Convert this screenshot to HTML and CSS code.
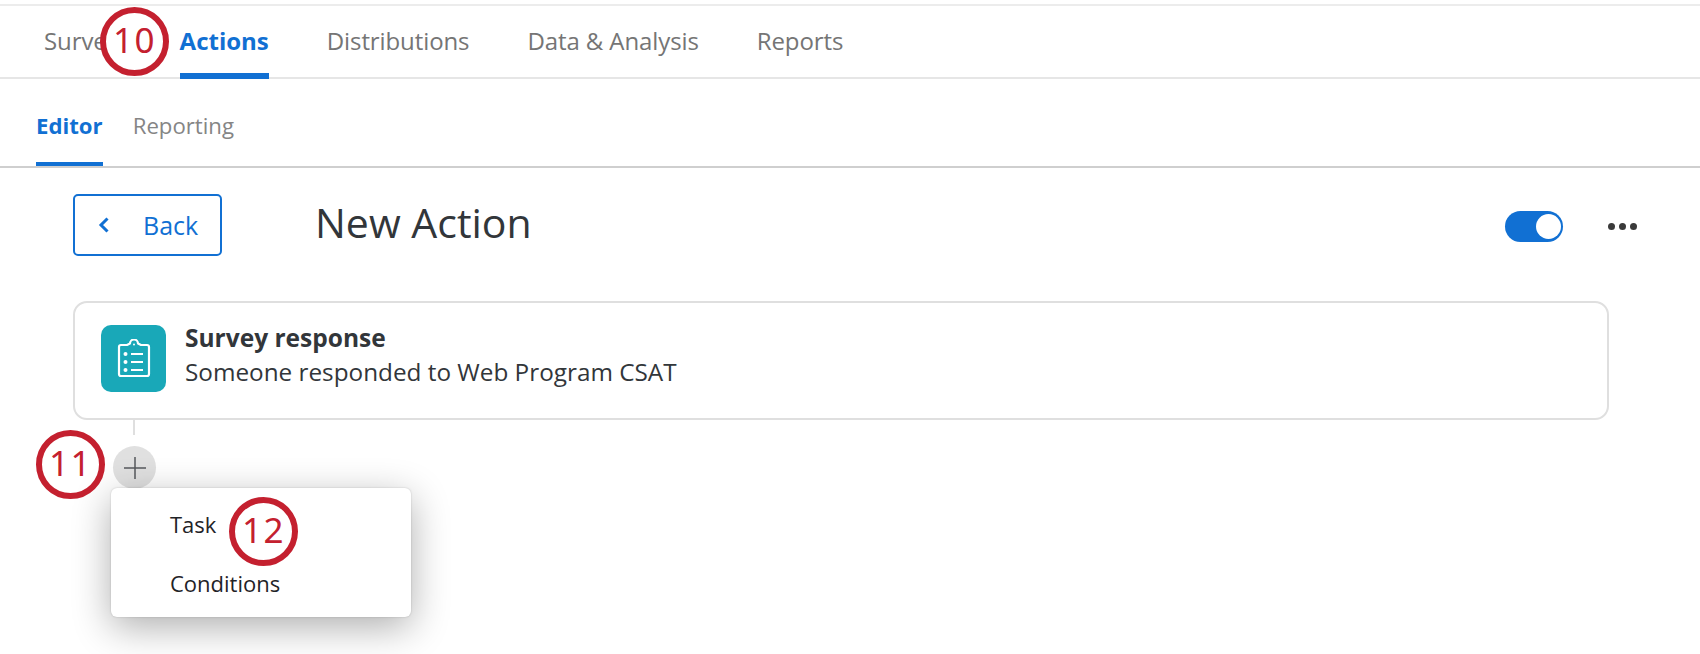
FILE: index.html
```html
<!DOCTYPE html>
<html lang="en">
<head>
<meta charset="utf-8">
<title>New Action</title>
<link rel="stylesheet" href="styles.css">
</head>
<body>
<div class="page">
  <nav class="main-nav">
    <a class="main-tab first">Survey</a>
    <a class="main-tab active">Actions</a>
    <a class="main-tab">Distributions</a>
    <a class="main-tab">Data &amp; Analysis</a>
    <a class="main-tab">Reports</a>
  </nav>
  <nav class="sub-nav">
    <a class="sub-tab active">Editor</a>
    <a class="sub-tab">Reporting</a>
  </nav>
  <main class="content">
    <header class="head">
      <button class="back">
        <svg class="chev" width="12" height="18" viewBox="0 0 12 18"><path d="M9.500 2.500 3 9l6.500 6.500" fill="none" stroke="#1170d3" stroke-width="3"/></svg>
        <span>Back</span>
      </button>
      <h1 class="title">New Action</h1>
      <div class="head-right">
        <span class="toggle"><span class="knob"></span></span>
        <span class="dots"><i></i><i></i><i></i></span>
      </div>
    </header>
    <section class="card">
      <span class="tile">
        <svg width="34" height="40" viewBox="0 0 34 40" fill="none" stroke="#fff" stroke-width="2.200">
          <path d="M10 6H4a2 2 0 0 0-2 2v27a2 2 0 0 0 2 2h26a2 2 0 0 0 2-2V8a2 2 0 0 0-2-2h-6l-3-1.500a4 4 0 0 0-8 0z" stroke-linejoin="round"/>
          <circle cx="17" cy="5.500" r="1" fill="#fff" stroke="none"/>
          <path d="M14 15h12M14 23h12M14 31h12"/>
          <circle cx="8.500" cy="15" r="2" fill="#fff" stroke="none"/>
          <circle cx="8.500" cy="23" r="2" fill="#fff" stroke="none"/>
          <circle cx="8.500" cy="31" r="2" fill="#fff" stroke="none"/>
        </svg>
      </span>
      <div class="card-text">
        <div class="card-title">Survey response</div>
        <div class="card-sub">Someone responded to Web Program CSAT</div>
      </div>
    </section>
    <div class="connector"></div>
    <div class="add-wrap">
      <span class="add">
        <svg width="24" height="24" viewBox="0 0 24 24"><path d="M12 1v22M1 12h22" stroke="#55585c" stroke-width="1.500"/></svg>
      </span>
      <div class="menu">
        <div class="menu-item">Task</div>
        <div class="menu-item">Conditions</div>
      </div>
    </div>
  </main>
  <span class="mark mark-10">10</span>
  <span class="mark mark-11">11</span>
  <span class="mark mark-12">12</span>
</div>
</body>
</html>
```
FILE: styles.css
```css
* { box-sizing: border-box; }
html, body { margin: 0; padding: 0; background: #fff; }
body { font-family: "Open Sans", "Noto Sans", sans-serif; color: #32363a; }
.page { position: relative; width: 1700px; height: 654px; overflow: hidden; padding-top: 4px; }

.main-nav {
  display: flex;
  gap: 58px;
  height: 75px;
  padding-left: 44px;
  border-top: 2px solid #ececec;
  border-bottom: 2px solid #e6e6e6;
}
.main-tab {
  display: block;
  height: 73px;
  padding-top: 19px;
  font-size: 24px;
  line-height: 32px;
  color: #757575;
  letter-spacing: -0.1px;
}
.main-tab.first { margin-right: 3px; }
.main-tab.active {
  color: #1170d3;
  font-weight: 700;
  letter-spacing: 0;
  border-bottom: 6px solid #1170d3;
}

.sub-nav {
  display: flex;
  gap: 30px;
  height: 89px;
  padding-left: 36px;
  border-bottom: 2px solid #cfcfcf;
}
.sub-tab {
  display: block;
  height: 87px;
  padding-top: 31px;
  font-size: 22.2px;
  line-height: 32px;
  color: #858585;
}
.sub-tab.active {
  color: #1170d3;
  font-weight: 700;
  border-bottom: 4px solid #1170d3;
}

.content { padding: 26px 91px 0 73px; }

.head { display: flex; align-items: center; height: 62px; }
.back {
  display: flex;
  align-items: center;
  width: 149px;
  height: 62px;
  padding: 0 0 0 23px;
  background: #fff;
  border: 2px solid #1170d3;
  border-radius: 5px;
  font-family: inherit;
  font-size: 25px;
  color: #1170d3;
}
.chev { margin-right: 33px; }
.title {
  margin: -6px 0 0 93px;
  font-size: 41px;
  line-height: 54px;
  font-weight: 400;
  color: #32363a;
}
.head-right { margin-left: auto; margin-right: -28px; display: flex; align-items: center; gap: 45px; margin-top: 3px; }
.toggle {
  display: flex;
  justify-content: flex-end;
  align-items: center;
  width: 58px;
  height: 31px;
  padding-right: 2px;
  border-radius: 16px;
  background: #1170d3;
}
.knob { width: 25px; height: 25px; border-radius: 50%; background: #fff; }
.dots { display: flex; gap: 4px; }
.dots i { display: block; width: 7px; height: 7px; border-radius: 50%; background: #3a3a3a; }

.card {
  display: flex;
  align-items: flex-start;
  height: 119px;
  margin-top: 45px;
  padding: 22px 26px;
  border: 2px solid #dfdfdf;
  border-radius: 14px;
}
.tile {
  display: flex;
  align-items: center;
  justify-content: center;
  width: 65px;
  height: 67px;
  border-radius: 10px;
  background: #19a8b8;
}
.card-text { margin-left: 19px; }
.card-title { font-size: 24.5px; line-height: 32px; font-weight: 700; color: #32363a; margin-top: -3px; }
.card-sub { font-size: 24.3px; line-height: 35px; color: #32363a; }

.connector { width: 2px; height: 15px; margin-left: 60px; background: #dfdfdf; }
.add-wrap { position: relative; margin-top: 11px; }
.add {
  display: flex;
  align-items: center;
  justify-content: center;
  width: 43px;
  height: 43px;
  margin-left: 40px;
  border-radius: 50%;
  background: #e0e0e0;
}
.menu {
  position: absolute;
  left: 38px;
  top: 42px;
  width: 300px;
  height: 129px;
  padding-top: 20px;
  background: #fff;
  border-radius: 6px;
  box-shadow: 0 10px 38px rgba(0, 0, 0, 0.32), 0 0 2px rgba(0, 0, 0, 0.2);
}
.menu-item {
  height: 59px;
  padding-left: 59px;
  font-size: 22px;
  line-height: 32px;
  color: #1f2327;
}

.mark {
  position: absolute;
  width: 69px;
  height: 69px;
  display: flex;
  align-items: center;
  justify-content: center;
  padding-bottom: 4px;
  background: #fff;
  border: 6px solid #c4202f;
  border-radius: 50%;
  color: #c4202f;
  font-family: "Noto Sans", "Open Sans", sans-serif;
  font-size: 35px;
  line-height: 1;
  letter-spacing: 1.500px;
}
.mark-10 { left: 100px; top: 7px; }
.mark-11 { left: 36px; top: 430px; background: transparent; }
.mark-12 { left: 229px; top: 497px; }
```
